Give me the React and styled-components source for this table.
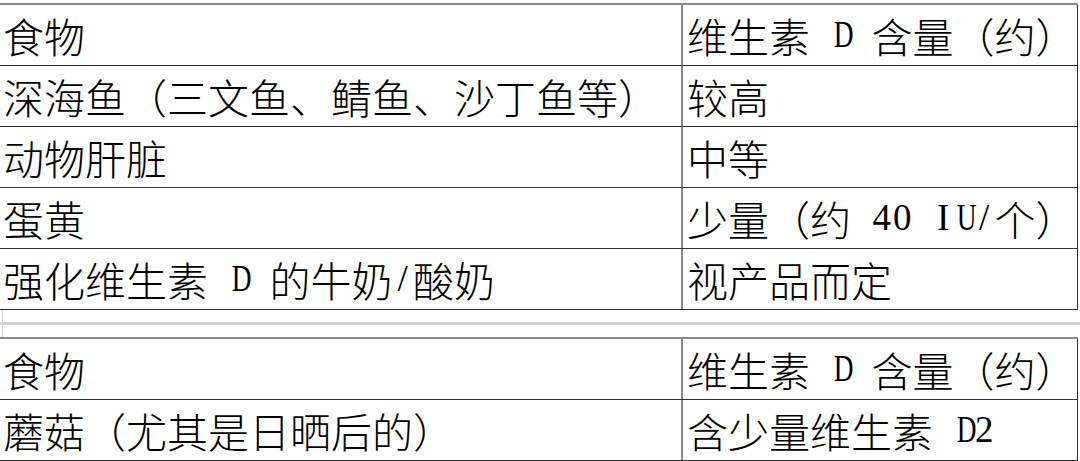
import React from 'react';
import styled, { createGlobalStyle } from 'styled-components';

const GlobalStyle = createGlobalStyle`
  html, body {
    margin: 0;
    padding: 0;
    background: #fff;
  }
  body {
    width: 1080px;
    height: 461px;
    overflow: hidden;
    font-family: "Noto Sans CJK SC", "Liberation Serif", serif;
  }
`;

const Page = styled.div`
  display: flex;
  flex-direction: column;
  padding-top: 3px;
`;

const Table = styled.div`
  display: flex;
  flex-direction: column;
  width: 1078px;
  border-top: 2px solid #8a8a8a;
`;

const Row = styled.div`
  display: grid;
  grid-template-columns: 683px 1fr;
  height: 60px;
  border-bottom: 1px solid #2e2e2e;
`;

const Cell = styled.div`
  padding-left: ${props => (props.$right ? '4px' : '3px')};
  font-size: 41px;
  font-weight: 300;
  line-height: 60px;
  color: #000;
  white-space: pre;
  overflow: hidden;
  border-right: ${props =>
    props.$right ? '1px solid #2e2e2e' : '2px solid #8a8a8a'};
`;

// Latin glyphs are half-width in the original song-style font
const Half = styled.span`
  display: inline-block;
  width: 20.5px;
  text-align: center;
  font-family: "Liberation Serif", "DejaVu Serif", serif;
  font-size: 37px;
  font-weight: 400;
  vertical-align: top;
  transform: scaleX(${props => (props.$wide ? 0.74 : 1)});
`;

const WIDE = 'DUMWNH';

const Lat = ({ text }) =>
  text.split('').map((c, i) => (
    <Half key={i} $wide={WIDE.includes(c)}>
      {c === ' ' ? '\u00a0' : c}
    </Half>
  ));

const Gap = styled.div`
  display: flex;
  flex-direction: column;
  height: 27px;
`;

const GapPart = styled.div`
  flex: 1;
  margin-left: 2px;
  border-left: 1px solid #d6d6d6;
`;

const GapLine = styled.div`
  height: 3px;
  background: #d2d2d2;
`;

const first = [
  ['深海鱼（三文鱼、鲭鱼、沙丁鱼等）', '较高'],
  ['动物肝脏', '中等'],
  ['蛋黄', <>少量（约<Lat text=" 40 IU/" />个）</>],
  [<>强化维生素<Lat text=" D " />的牛奶<Lat text="/" />酸奶</>, '视产品而定'],
];

const second = [
  ['蘑菇（尤其是日晒后的）', <>含少量维生素<Lat text=" D2" /></>],
];

const Header = () => (
  <Row>
    <Cell>食物</Cell>
    <Cell $right>维生素<Lat text=" D " />含量（约）</Cell>
  </Row>
);

const FoodTable = ({ rows }) => (
  <Table>
    <Header />
    {rows.map((r, i) => (
      <Row key={i}>
        <Cell>{r[0]}</Cell>
        <Cell $right>{r[1]}</Cell>
      </Row>
    ))}
  </Table>
);

export default function App() {
  return (
    <>
      <GlobalStyle />
      <Page>
        <FoodTable rows={first} />
        <Gap>
          <GapPart />
          <GapLine />
          <GapPart />
        </Gap>
        <FoodTable rows={second} />
      </Page>
    </>
  );
}
